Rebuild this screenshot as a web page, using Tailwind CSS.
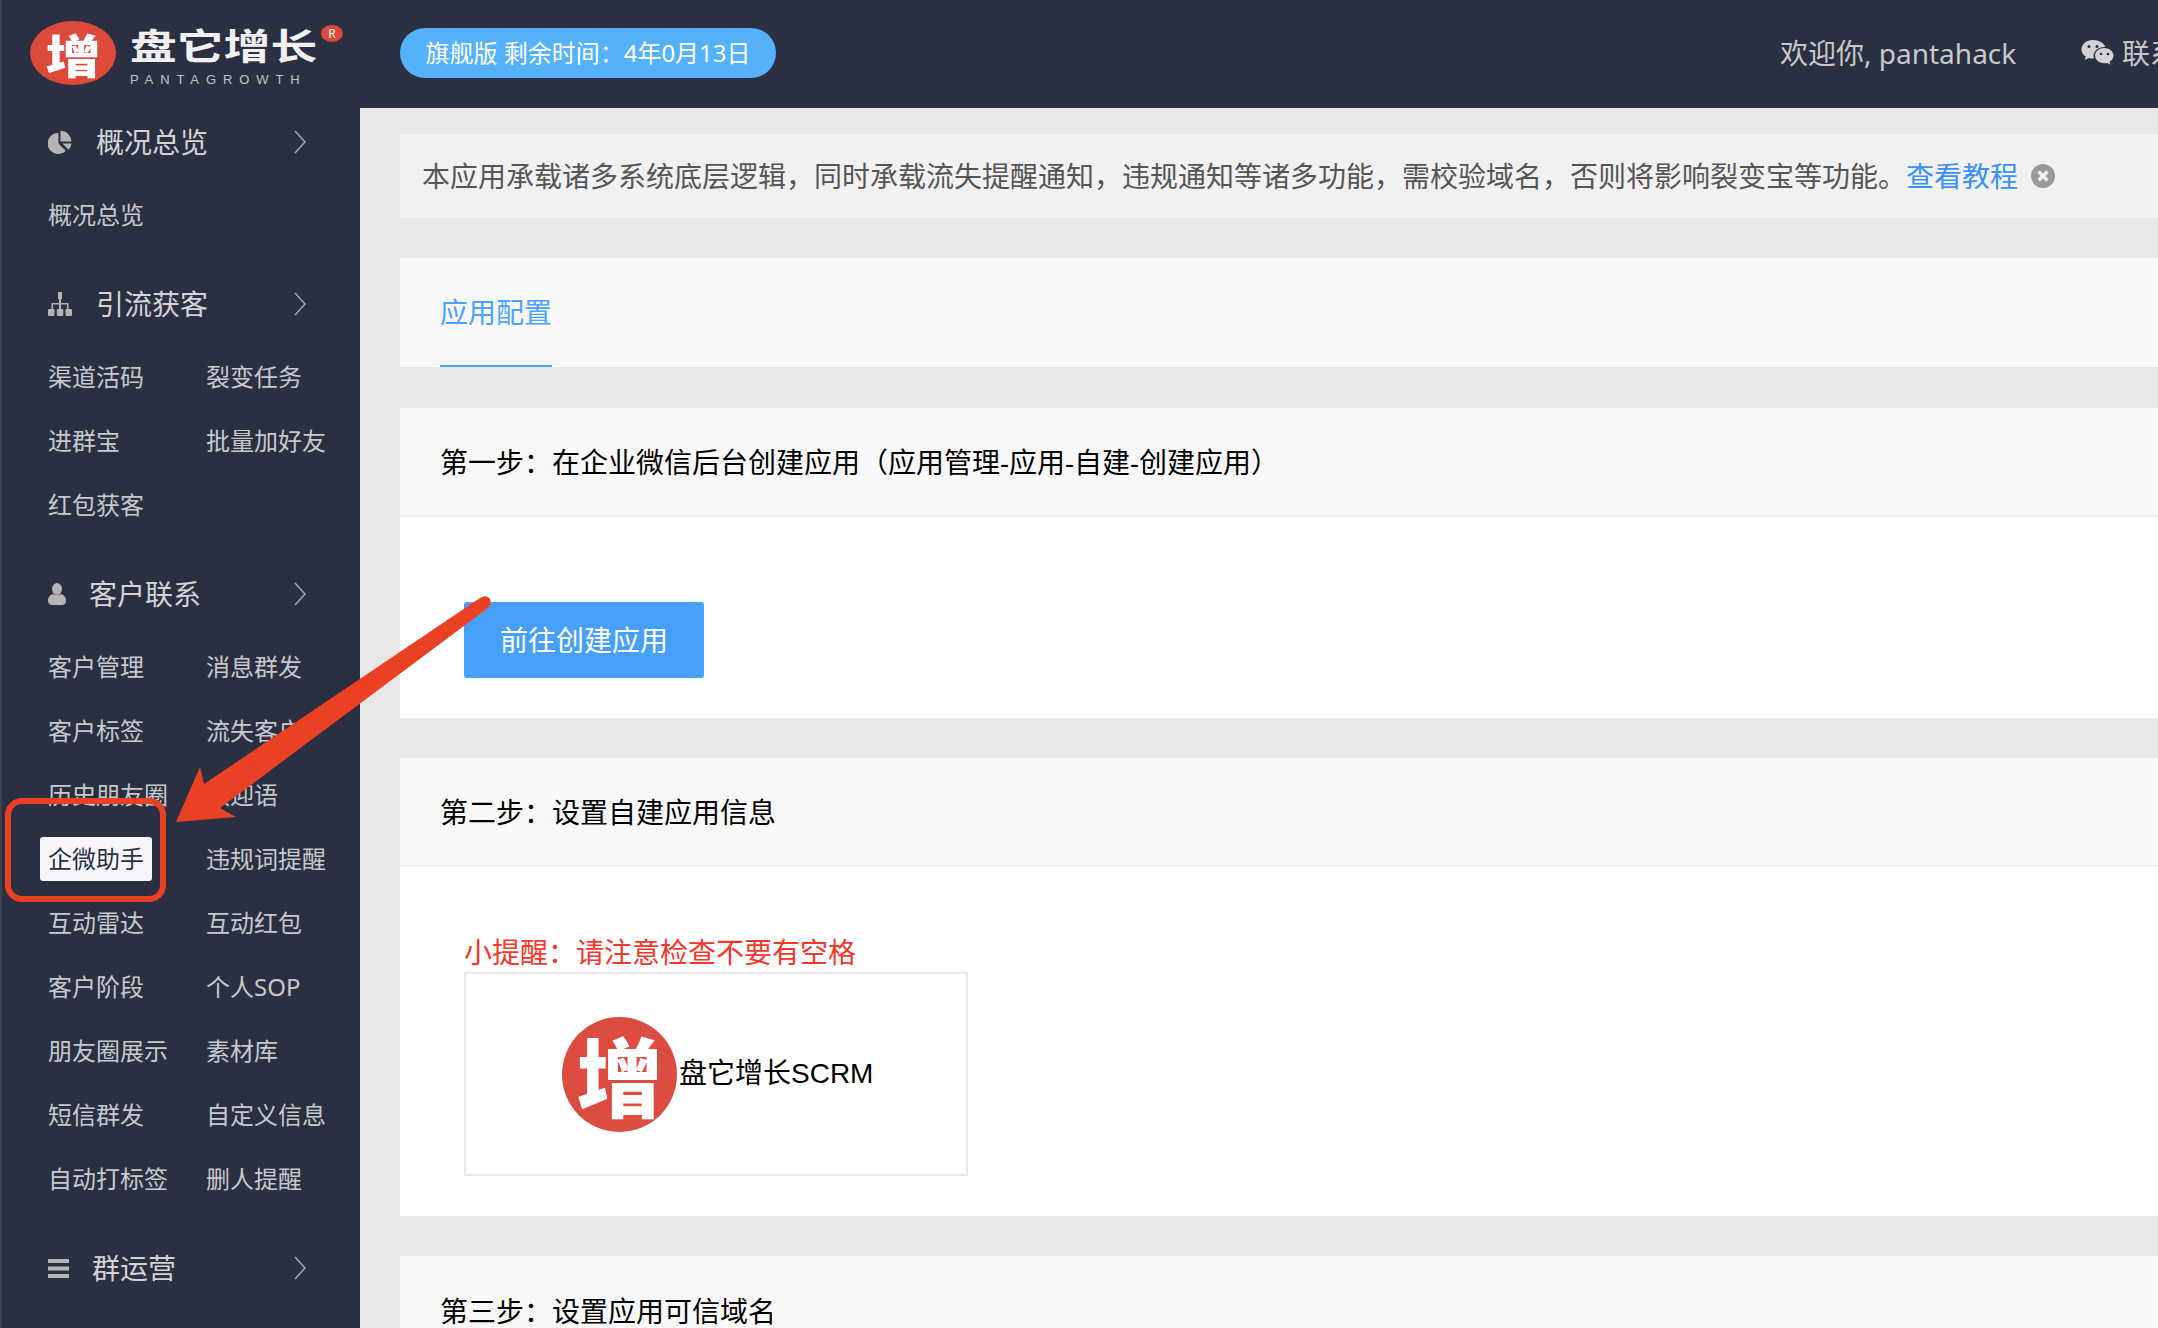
<!doctype html>
<html lang="zh-CN">
<head>
  <meta charset="UTF-8">
  <title>盘它增长 应用配置</title>
  <script src="https://cdn.jsdelivr.net/npm/@tailwindcss/browser@4"></script>
</head>

<body class="relative w-[2158px] h-[1328px] overflow-hidden bg-[#e7e7e7] font-['Noto_Sans','Noto_Sans_CJK_SC',sans-serif]">
  <!-- top bar -->
  <header class="h-[108px] bg-[#2a3042] border-l-2 border-[#3b4153] flex items-center overflow-hidden">
    <div class="w-[398px] shrink-0 flex items-center pl-[28px] mb-[3px]">
      <div class="w-[86px] h-[64px] rounded-[50%] bg-[#dd4a3c] flex items-center justify-center">
        <span class="text-[46px] leading-[64px] font-black text-white scale-x-[1.2] font-['Noto_Sans_CJK_SC',sans-serif]">增</span>
      </div>
      <div class="relative ml-[14px] w-[210px] h-[64px] mt-[3px]">
        <div class="text-[36px] leading-[44px] font-bold text-[#f0f0f0] origin-left scale-x-[1.3] whitespace-nowrap font-['Noto_Sans_CJK_SC',sans-serif]">盘它增长</div>
        <div class="text-[13px] leading-[14px] tracking-[6.900px] text-[#c4c4c4] font-['Liberation_Sans',sans-serif] mt-[7px] whitespace-nowrap">PANTAGROWTH</div>
        <span class="absolute left-[191px] top-[3px] w-[22px] h-[17px] rounded-[50%] bg-[#dd4a3c] text-white text-[12px] leading-[17px] text-center">R</span>
      </div>
    </div>
    <div class="h-[50px] w-[376px] mb-[2px] rounded-[25px] bg-[#55b1f9] text-white text-[24px] flex items-center justify-center whitespace-nowrap">旗舰版 剩余时间：4年0月13日</div>
    <div class="ml-auto mb-[3px] flex items-center text-[28px] text-[#c9c9c9] whitespace-nowrap w-[378px] shrink-0">
      <span class="w-[301px] shrink-0">欢迎你, pantahack</span>
      <svg class="w-[33px] h-[28px] shrink-0" viewBox="0 0 33 28" fill="#d2d2d2">
        <path d="M12 1C5.600 1 .5 5.200.5 10.400c0 3 1.700 5.400 4.300 7.200L3.700 21l4-2.100c1.400.4 2.800.6 4.300.6h1c-.3-.9-.4-1.800-.4-2.700C12.600 12 17.300 8 23.300 8h.9C23.200 4 18.100 1 12 1z"/>
        <path d="M32.500 16.600C32.500 12.300 28.300 9 23.300 9S14 12.300 14 16.600s4.200 7.700 9.300 7.700c1 0 2-.1 3-.4l3.200 1.800-.9-2.900c2.400-1.600 3.900-3.800 3.900-6.200z"/>
        <circle cx="8" cy="7.500" r="1.500" fill="#2a3042"/><circle cx="16" cy="7.500" r="1.500" fill="#2a3042"/>
        <circle cx="20" cy="15" r="1.300" fill="#2a3042"/><circle cx="27" cy="15" r="1.300" fill="#2a3042"/>
      </svg>
      <span class="ml-[8px]">联系</span>
    </div>
  </header>

  <div class="flex">
    <!-- side menu -->
    <aside class="w-[360px] h-[1220px] shrink-0 bg-[#2a3042] border-l-2 border-[#3b4153] pl-[46px] text-[24px] text-[#c8c9cc] overflow-hidden">
      <section class="mb-[23px]">
        <div class="h-[68px] mb-[7px] flex items-center text-[28px] text-[#d4d4d4]">
          <svg class="w-[24px] h-[24px] mr-[24px]" viewBox="0 0 24 24" fill="#b4b4b4"><path d="M10.500 3v10.500l7.200 7.300A10.500 10.500 0 1 1 10.500 3z"/><path d="M12.500 .8A10.800 10.800 0 0 1 23.300 11.500H12.500z"/><path d="M14.500 13.500h9a10.500 10.500 0 0 1-3 6.300z"/></svg>
          <span>概况总览</span>
          <svg class="w-[12px] h-[24px] ml-auto mr-[54px]" viewBox="0 0 12 24" fill="none" stroke="#a6a8ae" stroke-width="1.500"><path d="M1 1l10 11L1 23"/></svg>
        </div>
        <div class="grid grid-cols-[158px_1fr] auto-rows-[64px] items-center whitespace-nowrap">
          <span>概况总览</span>
        </div>
      </section>
      <section class="mb-[23px]">
        <div class="h-[68px] mb-[7px] flex items-center text-[28px] text-[#d4d4d4]">
          <svg class="w-[24px] h-[24px] mr-[24px]" viewBox="0 0 24 24" fill="#b4b4b4"><path d="M10 0h4v7h-1v4h7.500v6h-1.500v-4.500H13V17h-2v-4.500H5V17H3.500v-6H11V7h-1z"/><rect x="0" y="17" width="6.500" height="7" rx="1"/><rect x="8.800" y="17" width="6.500" height="7" rx="1"/><rect x="17.500" y="17" width="6.500" height="7" rx="1"/></svg>
          <span>引流获客</span>
          <svg class="w-[12px] h-[24px] ml-auto mr-[54px]" viewBox="0 0 12 24" fill="none" stroke="#a6a8ae" stroke-width="1.500"><path d="M1 1l10 11L1 23"/></svg>
        </div>
        <div class="grid grid-cols-[158px_1fr] auto-rows-[64px] items-center whitespace-nowrap">
          <span>渠道活码</span><span>裂变任务</span>
          <span>进群宝</span><span>批量加好友</span>
          <span>红包获客</span>
        </div>
      </section>
      <section class="mb-[23px]">
        <div class="h-[68px] mb-[7px] flex items-center text-[28px] text-[#d4d4d4]">
          <svg class="w-[18px] h-[22px] mr-[23px]" viewBox="0 0 18 22" fill="#b4b4b4"><ellipse cx="9" cy="6" rx="5" ry="6"/><path d="M0 18c0-4 2-6 5-7 2 1.500 6 1.500 8 0 3 1 5 3 5 7 0 2.500-2 4-4 4H4c-2 0-4-1.500-4-4z"/></svg>
          <span>客户联系</span>
          <svg class="w-[12px] h-[24px] ml-auto mr-[54px]" viewBox="0 0 12 24" fill="none" stroke="#a6a8ae" stroke-width="1.500"><path d="M1 1l10 11L1 23"/></svg>
        </div>
        <div class="grid grid-cols-[158px_1fr] auto-rows-[64px] items-center whitespace-nowrap">
          <span>客户管理</span><span>消息群发</span>
          <span>客户标签</span><span>流失客户</span>
          <span>历史朋友圈</span><span>欢迎语</span>
          <span><span class="-ml-[8px] inline-block h-[44px] w-[112px] rounded-[3px] bg-[#f5f6fa] pl-[8px] leading-[44px] text-[#2a3042]">企微助手</span></span><span>违规词提醒</span>
          <span>互动雷达</span><span>互动红包</span>
          <span>客户阶段</span><span>个人SOP</span>
          <span>朋友圈展示</span><span>素材库</span>
          <span>短信群发</span><span>自定义信息</span>
          <span>自动打标签</span><span>删人提醒</span>
        </div>
      </section>
      <section>
        <div class="h-[68px] flex items-center text-[28px] text-[#d4d4d4]">
          <svg class="w-[21px] h-[19px] mr-[23px]" viewBox="0 0 21 19" fill="#b4b4b4"><rect width="21" height="4"/><rect y="7.500" width="21" height="4"/><rect y="15" width="21" height="4"/></svg>
          <span>群运营</span>
          <svg class="w-[12px] h-[24px] ml-auto mr-[54px]" viewBox="0 0 12 24" fill="none" stroke="#a6a8ae" stroke-width="1.500"><path d="M1 1l10 11L1 23"/></svg>
        </div>
      </section>
    </aside>

    <!-- content -->
    <main class="flex-1 pl-[40px] pt-[26px] text-[28px] overflow-hidden">
      <div class="h-[84px] bg-[#f1f1f1] pl-[22px] flex items-center text-[#555] whitespace-nowrap">
        <span>本应用承载诸多系统底层逻辑，同时承载流失提醒通知，违规通知等诸多功能，需校验域名，否则将影响裂变宝等功能。</span>
        <span class="text-[#3a91f5]">查看教程</span>
        <svg class="w-[24px] h-[24px] ml-[13px]" viewBox="0 0 24 24"><circle cx="12" cy="12" r="12" fill="#999"/><path d="M7.500 7.500l9 9M16.500 7.500l-9 9" stroke="#f1f1f1" stroke-width="3.500"/></svg>
      </div>

      <div class="mt-[40px] h-[109px] bg-[#f8f8f8] pl-[40px]">
        <div class="w-[112px] h-[109px] leading-[108px] text-[#4ba3fb] border-b-2 border-[#4ba3fb] whitespace-nowrap">应用配置</div>
      </div>

      <div class="mt-[41px] bg-white">
        <div class="h-[109px] bg-[#f8f8f8] border-b-2 border-[#efefef] pl-[40px] flex items-center text-black whitespace-nowrap">第一步：在企业微信后台创建应用（应用管理-应用-自建-创建应用）</div>
        <div class="h-[201px] pl-[64px] pt-[85px]">
          <button class="w-[240px] h-[76px] rounded-[3px] bg-[#479ff9] text-white text-[28px]">前往创建应用</button>
        </div>
      </div>

      <div class="mt-[40px] bg-white">
        <div class="h-[109px] bg-[#f8f8f8] border-b-2 border-[#efefef] pl-[40px] flex items-center text-black whitespace-nowrap">第二步：设置自建应用信息</div>
        <div class="h-[349px] pl-[64px] pt-[64px]">
          <div class="h-[41px] leading-[42px] text-[#f5362b] whitespace-nowrap">小提醒：请注意检查不要有空格</div>
          <div class="w-[504px] h-[204px] border-2 border-[#e8e8e8] flex items-center pl-[96px]">
            <div class="w-[115px] h-[115px] shrink-0 rounded-full bg-[#dc4c40] flex items-center justify-center">
              <span class="text-[86px] leading-none font-black text-white font-['Noto_Sans_CJK_SC',sans-serif]">增</span>
            </div>
            <span class="ml-[2px] text-black whitespace-nowrap font-['Liberation_Sans','Noto_Sans_CJK_SC',sans-serif]">盘它增长SCRM</span>
          </div>
        </div>
      </div>

      <div class="mt-[40px] h-[109px] bg-[#f8f8f8] pl-[40px] flex items-center text-black whitespace-nowrap">第三步：设置应用可信域名</div>
    </main>
  </div>

  <!-- red annotation drawn on top of the screenshot -->
  <svg class="absolute left-0 top-0 pointer-events-none" width="2158" height="1328" viewBox="0 0 2158 1328" fill="none">
    <rect x="8" y="801" width="155" height="98" rx="14" stroke="#ea4023" stroke-width="6"/>
    <path fill="#ea4023" d="M200 767L204 784L480 598Q487 594 490 599Q492 604 488 608L220 808L236 817L176 822z"/>
  </svg>
</body>

</html>
